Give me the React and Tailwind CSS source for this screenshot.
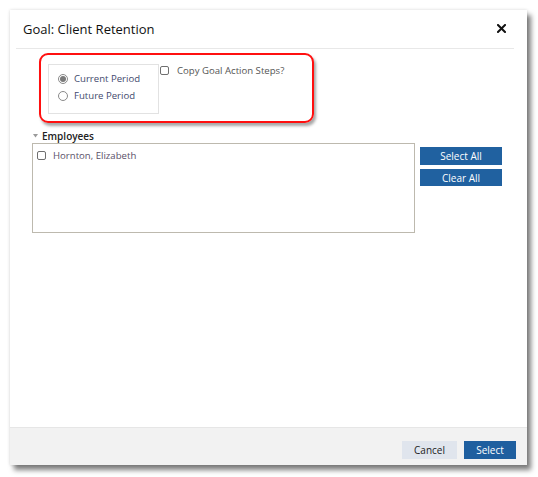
import React from "react";

function Radio({ checked, label }) {
  return (
    <div className="flex items-center h-[17px]">
      <span className="w-[10px] h-[10px] rounded-full border border-[#8a8a8a] bg-white flex items-center justify-center">
        {checked && <span className="w-[6px] h-[6px] rounded-full bg-[#7a7a7a]" />}
      </span>
      <span className="ml-[6px] text-[9.6px] text-[#434a6e] leading-none">{label}</span>
    </div>
  );
}

function Check() {
  return <span className="block w-[9px] h-[9px] rounded-[2px] border border-[#6f6f6f] bg-white" />;
}

export default function App() {
  return (
    <div
      className="w-[538px] h-[477px] bg-white pl-[10px] pt-[10px]"
      style={{ fontFamily: '"Open Sans", "Noto Sans", sans-serif' }}
    >
      <div className="relative w-[517px] h-[455px] bg-white flex flex-col shadow-[4px_5px_5px_rgba(0,0,0,0.5),0_0_3px_rgba(0,0,0,0.15)]">
        {/* Header */}
        <div className="h-[39px] ml-[6px] mr-[13px] border-b border-[#e8e8e8] flex items-center justify-between pl-[7px] pr-[8px]">
          <span className="text-[13px] text-[#111] leading-none">Goal: Client Retention</span>
          <svg width="9" height="9" viewBox="0 0 9 9" className="mt-[-1px]">
            <path d="M1 1L8 8M8 1L1 8" stroke="#111" strokeWidth="2" strokeLinecap="square" />
          </svg>
        </div>

        {/* Body */}
        <div className="flex-1 pl-[22px] pt-[15px]">
          <div className="flex items-start ml-[16px]">
            <div className="w-[111px] h-[50px] border border-[#e2e2e2] pl-[9px] pt-[5px]">
              <Radio checked label="Current Period" />
              <Radio label="Future Period" />
            </div>
            <div className="flex items-center mt-[2px] ml-[1px]">
              <Check />
              <span className="ml-[8px] text-[9.6px] text-[#555] leading-none">Copy Goal Action Steps?</span>
            </div>
          </div>

          <div className="flex items-center mt-[15px] h-[14px] ml-[1px]">
            <svg width="5" height="4" viewBox="0 0 5 4">
              <path d="M0 0H5L2.5 3.5Z" fill="#9a9a9a" />
            </svg>
            <span className="ml-[4px] text-[10px] font-semibold text-[#222] leading-none">Employees</span>
          </div>

          <div className="flex items-start">
            <div className="w-[383px] h-[90px] border border-[#bdb9ae] pl-[4px] pt-[7px]">
              <div className="flex items-center">
                <Check />
                <span className="ml-[7px] text-[9.6px] text-[#5a5068] leading-none">Hornton, Elizabeth</span>
              </div>
            </div>
            <div className="ml-[5px] mt-[4px] flex flex-col gap-[4px]">
              <button className="w-[82px] h-[18px] bg-[#2061a0] text-white text-[10px] leading-none">Select All</button>
              <button className="w-[82px] h-[17px] bg-[#2061a0] text-white text-[10px] leading-none">Clear All</button>
            </div>
          </div>
        </div>

        {/* Footer */}
        <div className="h-[38px] bg-[#f2f2f2] border-t border-[#e6e6e6] flex items-start justify-end pt-[13px] pr-[11px] gap-[7px]">
          <button className="w-[55px] h-[18px] bg-[#e0e5ed] text-[#222] text-[10px] leading-none">Cancel</button>
          <button className="w-[52px] h-[18px] bg-[#1f5f9f] text-white text-[10px] leading-none">Select</button>
        </div>

        {/* Red annotation */}
        <div className="absolute left-[29px] top-[43px] w-[275px] h-[70px] border-2 border-[#ff1010] rounded-[9px] shadow-[2px_3px_3px_rgba(0,0,0,0.35)] pointer-events-none" />
      </div>
    </div>
  );
}
